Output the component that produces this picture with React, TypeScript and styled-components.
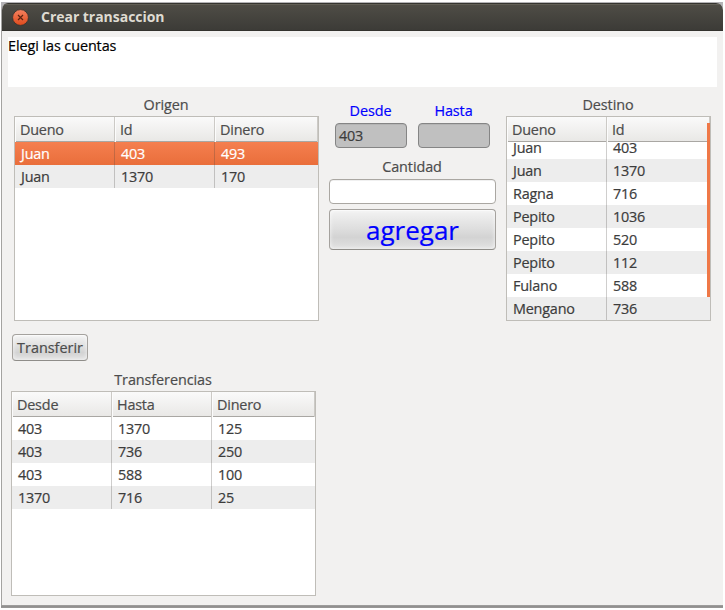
import React from 'react';
import styled, { createGlobalStyle, css } from 'styled-components';

const GlobalStyle = createGlobalStyle`
  * { box-sizing: border-box; }
  body {
    margin: 0;
    background: #fff;
    font-family: 'Open Sans', 'Noto Sans', sans-serif;
    font-size: 14.4px;
    letter-spacing: -0.2px;
    color: #3c3c3c;
    -webkit-text-stroke: 0.2px currentColor;
  }
`;

const Desktop = styled.div`
  width: 725px;
  height: 610px;
  padding: 2px 2px 0 1px;
  overflow: hidden;
  background: #fff;
`;

const Backdrop = styled.div`
  height: 606px;
  padding-top: 1px;
  background: linear-gradient(#b4b3b6 0 12px, transparent 12px 602px, #a3a2a1 603px, #8b8a89 605px, #a3a2a1 606px);
`;

const Window = styled.div`
  height: 602px;
  border-radius: 7px 7px 0 0;
  overflow: hidden;
  background: #f2f1f0;
  border-left: 1px solid #a4a3a1;
`;

const TitleBar = styled.header`
  display: flex;
  align-items: center;
  gap: 12px;
  height: 28px;
  margin-left: -1px;
  padding-left: 11px;
  background: linear-gradient(#4f4d46, #3c3b37);
  border-top: 1px solid #35342f;
  border-bottom: 1px solid #33322e;
  box-shadow: inset 0 1px #615e55;
`;

const Title = styled.h1`
  margin: 0;
  font-size: 14px;
  line-height: 20px;
  font-weight: 700;
  letter-spacing: -0.03px;
  color: #dfdbd2;
  -webkit-text-stroke: 0;
`;

const Message = styled.div`
  height: 50px;
  margin: 6px 6px 0;
  line-height: 18px;
  letter-spacing: -0.08px;
  background: #fff;
  color: #000;
`;

const MainRow = styled.main`
  display: flex;
  align-items: flex-start;
  height: 234px;
  padding: 8px 0 0 12px;
`;

const Column = styled.section<{ $width: number; $left?: number }>`
  width: ${p => p.$width}px;
  margin-left: ${p => p.$left ?? 0}px;
`;

const Caption = styled.div<{ $blue?: boolean; $height?: number }>`
  height: ${p => p.$height ?? 21}px;
  padding-right: 1px;
  line-height: 20px;
  text-align: center;
  letter-spacing: -0.08px;
  color: ${p => (p.$blue ? '#0000ff' : '#4c4c4c')};
`;

const CantidadCaption = styled(Caption)`
  height: 22px;
  margin-top: 9px;
`;

const TableFrame = styled.div`
  position: relative;
  height: 205px;
  border: 1px solid #bfbdb8;
  background: #fff;
  overflow: hidden;
`;

const columns = css<{ $cols: number }>`
  display: grid;
  grid-template-columns: repeat(${p => p.$cols - 1}, 100px) 1fr;
`;

const HeaderRow = styled.div<{ $cols: number }>`
  ${columns}
  height: 25px;
  background: linear-gradient(#fafafa, #e9e8e6);
  border-bottom: 1px solid #a9a7a3;
`;

const HeaderCell = styled.div`
  padding-left: 5px;
  line-height: 25px;
  color: #4c4c4c;
  border-right: 1px solid #cccac6;
  box-shadow: inset 1px 0 #fcfcfc;
`;

const RowsClip = styled.div`
  height: 178px;
  overflow: hidden;
`;

const Rows = styled.div<{ $scroll: number }>`
  margin-top: ${p => -p.$scroll}px;
`;

const Row = styled.div<{ $cols: number; $selected?: boolean }>`
  ${columns}
  height: 23px;
  color: #3c3c3c;
  background: #fff;
  &:nth-child(even) { background: #ededed; }
  ${p => p.$selected && css`
    color: #fff;
    background: linear-gradient(#f57f4f, #e96e3b);
  `}
`;

const Cell = styled.div`
  padding-left: 6px;
  line-height: 23px;
  &:not(:last-child) { border-right: 1px solid rgba(70, 65, 60, 0.26); }
`;

const ScrollThumb = styled.div`
  position: absolute;
  right: 0;
  top: 6px;
  width: 3px;
  height: 174px;
  background: #ef7847;
`;

const FieldPair = styled.div`
  display: grid;
  grid-template-columns: 72px 72px;
  column-gap: 11px;
  padding: 6px 6px 0;
`;

const Field = styled.div<{ $disabled?: boolean }>`
  height: 25px;
  padding-left: 3px;
  line-height: 24px;
  border: 1px solid ${p => (p.$disabled ? '#858585' : '#aaa7a2')};
  border-radius: 4px;
  background: ${p => (p.$disabled ? '#c0c0c0' : '#fff')};
  box-shadow: inset 0 1px ${p => (p.$disabled ? '#b4b4b4' : '#f0f0f0')};
`;

const Button = styled.button<{ $large?: boolean }>`
  display: flex;
  align-items: center;
  justify-content: center;
  width: ${p => (p.$large ? 167 : 76)}px;
  height: ${p => (p.$large ? 41 : 27)}px;
  margin: ${p => (p.$large ? '5px 0 0' : '0 0 0 10px')};
  padding: 0;
  border: 1px solid #a5a29e;
  border-bottom-color: #8f8d89;
  border-radius: 4px;
  background: linear-gradient(#f3f3f3, #dedede 48%, #d3d3d3 70%, #e2e2e2);
  box-shadow: inset 0 1px #fafafa, inset 0 0 4px rgba(255, 255, 255, 0.75);
  font-family: inherit;
  font-size: ${p => (p.$large ? 26 : 14.4)}px;
  line-height: 20px;
  color: ${p => (p.$large ? '#0000ff' : '#4c4c4c')};
`;

const BottomArea = styled.div`
  padding-top: 13px;
`;

const Transfers = styled.section`
  width: 305px;
  margin: 9px 0 0 9px;
`;

interface TableProps {
  heads: string[];
  rows: string[][];
  selected?: number;
  scroll?: number;
  thumb?: boolean;
}

function Table({ heads, rows, selected, scroll = 0, thumb }: TableProps) {
  return (
    <TableFrame>
      <HeaderRow $cols={heads.length}>
        {heads.map(h => <HeaderCell key={h}>{h}</HeaderCell>)}
      </HeaderRow>
      <RowsClip>
        <Rows $scroll={scroll}>
          {rows.map((row, i) => (
            <Row key={i} $cols={heads.length} $selected={i === selected}>
              {row.map((value, j) => <Cell key={j}>{value}</Cell>)}
            </Row>
          ))}
        </Rows>
      </RowsClip>
      {thumb && <ScrollThumb />}
    </TableFrame>
  );
}

function CloseIcon() {
  return (
    <svg width="17" height="17" viewBox="0 0 17 17">
      <defs>
        <linearGradient id="close" x1="0" y1="0" x2="0" y2="1">
          <stop offset="0" stopColor="#f58260" />
          <stop offset="1" stopColor="#df4a1c" />
        </linearGradient>
      </defs>
      <circle cx="8.5" cy="8.5" r="7.9" fill="url(#close)" stroke="#33312d" strokeWidth="0.8" />
      <path d="M6 6l5 5M11 6l-5 5" stroke="#5b2412" strokeWidth="1.2" />
    </svg>
  );
}

export default function App() {
  return (
    <Desktop>
      <GlobalStyle />
      <Backdrop>
        <Window>
          <TitleBar>
            <CloseIcon />
            <Title>Crear transaccion</Title>
          </TitleBar>
          <Message>Elegi las cuentas</Message>
          <MainRow>
            <Column $width={305}>
              <Caption>Origen</Caption>
              <Table
                heads={['Dueno', 'Id', 'Dinero']}
                rows={[['Juan', '403', '493'], ['Juan', '1370', '170']]}
                selected={0}
              />
            </Column>
            <Column $width={167} $left={10}>
              <FieldPair>
                <Caption $blue $height={22}>Desde</Caption>
                <Caption $blue $height={22}>Hasta</Caption>
                <Field $disabled>403</Field>
                <Field $disabled />
              </FieldPair>
              <CantidadCaption>Cantidad</CantidadCaption>
              <Field />
              <Button $large>agregar</Button>
            </Column>
            <Column $width={205} $left={10}>
              <Caption>Destino</Caption>
              <Table
                heads={['Dueno', 'Id']}
                rows={[
                  ['Juan', '403'], ['Juan', '1370'], ['Ragna', '716'], ['Pepito', '1036'],
                  ['Pepito', '520'], ['Pepito', '112'], ['Fulano', '588'], ['Mengano', '736'],
                ]}
                scroll={6}
                thumb
              />
            </Column>
          </MainRow>
          <BottomArea>
            <Button>Transferir</Button>
            <Transfers>
              <Caption>Transferencias</Caption>
              <Table
                heads={['Desde', 'Hasta', 'Dinero']}
                rows={[['403', '1370', '125'], ['403', '736', '250'], ['403', '588', '100'], ['1370', '716', '25']]}
              />
            </Transfers>
          </BottomArea>
        </Window>
      </Backdrop>
    </Desktop>
  );
}
